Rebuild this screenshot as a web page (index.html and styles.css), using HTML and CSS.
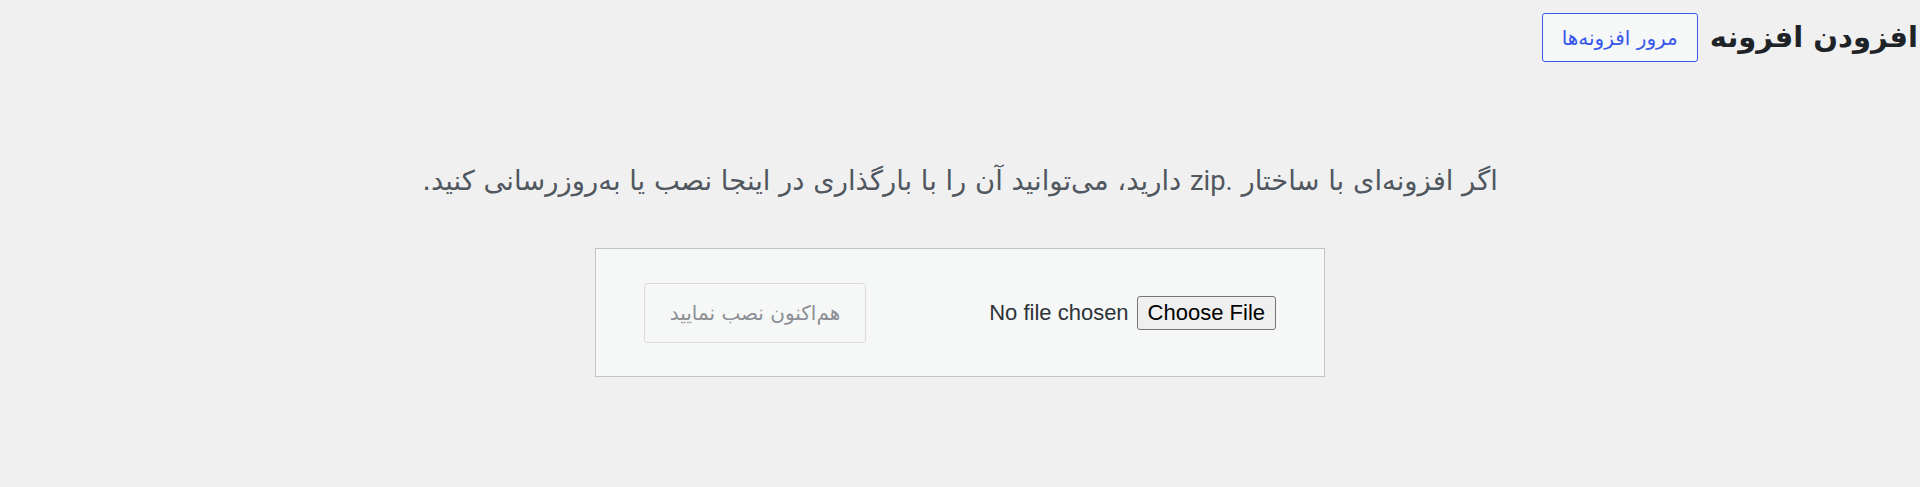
FILE: index.html
```html
<!DOCTYPE html>
<html lang="fa" dir="rtl">
<head>
<meta charset="utf-8">
<title>افزودن افزونه</title>
<link rel="stylesheet" href="styles.css">
</head>
<body>
<div class="wrap">
  <div class="page-header">
    <h1 class="page-title">افزودن افزونه</h1>
    <a class="title-action" href="#">مرور افزونه‌ها</a>
  </div>
  <p class="install-help">اگر افزونه‌ای با ساختار <span class="latin">.zip</span> دارید، می‌توانید آن را با بارگذاری در اینجا نصب یا به‌روزرسانی کنید.</p>
  <form class="upload-form">
    <input class="file-input" type="file" name="pluginzip">
    <button class="install-button" type="button" disabled>هم‌اکنون نصب نمایید</button>
  </form>
</div>
</body>
</html>
```
FILE: styles.css
```css
html, body {
  margin: 0;
  padding: 0;
  background: #f0f0f1;
}
body {
  height: 487px;
  overflow: hidden;
  font-family: "DejaVu Sans", sans-serif;
  color: #3c434a;
}
.wrap {
  direction: rtl;
}
.page-header {
  display: flex;
  align-items: center;
  gap: 12px;
  padding: 13px 2px 0 0;
}
.page-title {
  margin: 0;
  font-family: "DejaVu Sans", sans-serif;
  font-weight: 700;
  font-size: 29px;
  line-height: 49px;
  color: #1d2327;
}
.title-action {
  box-sizing: border-box;
  display: flex;
  align-items: center;
  height: 49px;
  padding: 0 19px;
  border: 1px solid #3858e9;
  border-radius: 3px;
  color: #3858e9;
  text-decoration: none;
  font-size: 20px;
  background: #f6f7f7;
}
.install-help {
  margin: 103px 0 0;
  text-align: center;
  font-size: 27.4px;
  line-height: 32px;
  color: #50575e;
}
.latin {
  font-family: Roboto, sans-serif;
}
.upload-form {
  box-sizing: border-box;
  width: 730px;
  height: 129px;
  margin: 51px auto 0;
  padding: 0 48px;
  display: flex;
  align-items: center;
  justify-content: space-between;
  background: #f6f7f7;
  border: 1px solid #c3c4c7;
}
.file-input {
  width: 300px;
  flex-shrink: 0;
  font-family: "Liberation Sans", Arial, sans-serif;
  font-size: 22px;
  color: #2c3338;
}
.file-input::file-selector-button {
  font-family: "Liberation Sans", Arial, sans-serif;
  font-size: 22px;
  color: #000;
  background: #efefef;
  border: 1px solid #767676;
  border-radius: 3px;
  padding: 3px 10px;
  margin: 0 0 0 8px;
}
.install-button {
  box-sizing: border-box;
  flex-shrink: 0;
  width: 222px;
  height: 60px;
  font-family: "DejaVu Sans", sans-serif;
  font-size: 20px;
  color: #8c8f94;
  background: #f6f7f7;
  border: 1px solid #dcdcde;
  border-radius: 3px;
}
```
